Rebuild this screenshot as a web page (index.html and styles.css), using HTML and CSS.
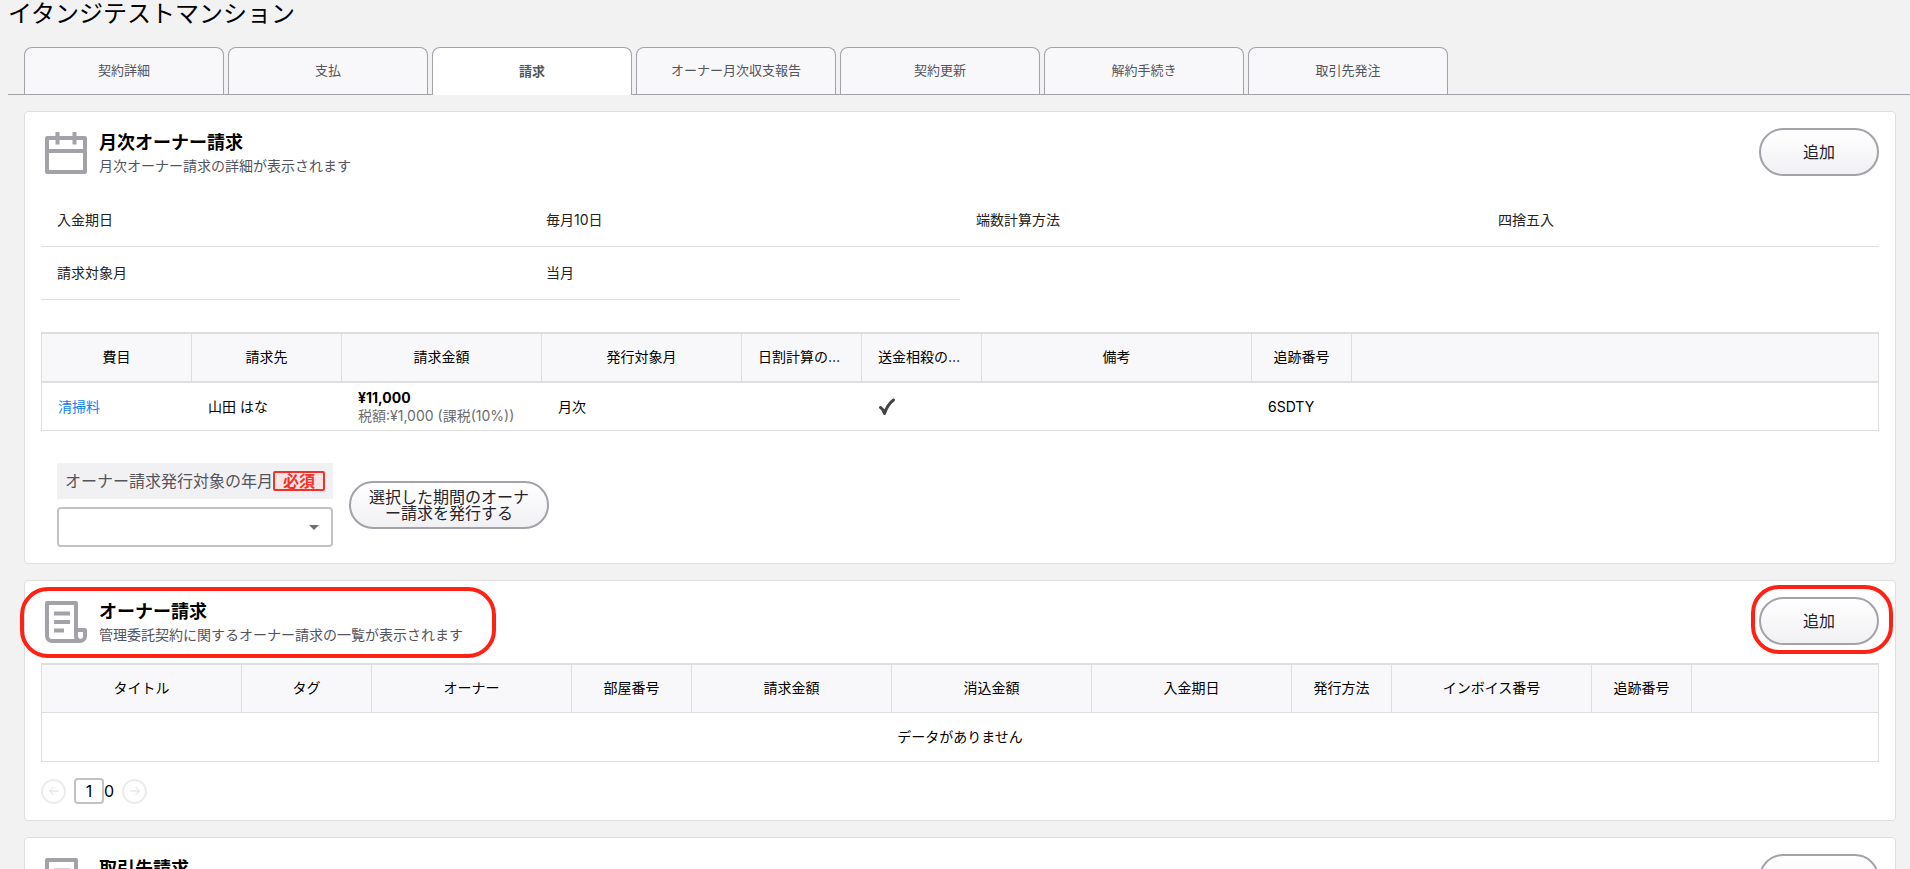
FILE: index.html
```html
<!DOCTYPE html>
<html lang="ja">
<head>
<meta charset="utf-8">
<title>イタンジテストマンション</title>
<link rel="stylesheet" href="styles.css">
</head>
<body>
<svg class="sprite" aria-hidden="true">
  <symbol id="doc" viewBox="0 0 42 42">
    <path d="M2 2h29v27h9v6a5 5 0 0 1-5 5H7a5 5 0 0 1-5-5zM31 29v6a5 5 0 0 0 4 5" fill="none" stroke="#a2a2a8" stroke-width="4" stroke-linejoin="round"/>
    <path d="M9 12.500h16M9 21h16M9 29.500h10" stroke="#a2a2a8" stroke-width="4"/>
  </symbol>
</svg>
<h1 class="page-title">イタンジテストマンション</h1>
<nav class="tabs">
  <a class="tab" href="#">契約詳細</a>
  <a class="tab" href="#">支払</a>
  <a class="tab tab-active" href="#">請求</a>
  <a class="tab" href="#">オーナー月次収支報告</a>
  <a class="tab" href="#">契約更新</a>
  <a class="tab" href="#">解約手続き</a>
  <a class="tab" href="#">取引先発注</a>
</nav>
<main class="cards">
  <section class="card">
    <header class="card-head">
      <div class="heading">
        <svg class="icon" viewBox="0 0 42 42" aria-hidden="true"><path d="M2 6h38v34H2zM2 19h38M12.500 0v12.500M29.500 0v12.500" fill="none" stroke="#a2a2a8" stroke-width="4" stroke-linejoin="round"/></svg>
        <div><h2 class="card-title">月次オーナー請求</h2><p class="card-sub">月次オーナー請求の詳細が表示されます</p></div>
      </div>
      <button class="btn" type="button">追加</button>
    </header>
    <div class="facts">
      <dl class="fact"><dt>入金期日</dt><dd>毎月10日</dd></dl>
      <dl class="fact fact-right"><dt>端数計算方法</dt><dd>四捨五入</dd></dl>
      <dl class="fact"><dt>請求対象月</dt><dd>当月</dd></dl>
    </div>
    <table class="grid grid-filled">
      <colgroup><col class="w150"><col class="w150"><col class="w200"><col class="w200"><col class="w120"><col class="w120"><col class="w270"><col class="w100"><col></colgroup>
      <thead><tr><th>費目</th><th>請求先</th><th>請求金額</th><th>発行対象月</th><th>日割計算の有無</th><th>送金相殺の有無</th><th>備考</th><th>追跡番号</th><th></th></tr></thead>
      <tbody><tr>
        <td><a class="link" href="#">清掃料</a></td><td>山田 はな</td>
        <td><div class="amount">¥11,000</div><div class="tax">税額:¥1,000 (課税(10%))</div></td>
        <td>月次</td><td></td>
        <td><svg class="check" viewBox="0 0 18 18" role="img" aria-label="あり"><path d="M2.500 9.500C5 11 5.500 13 6.500 15.500 8.500 9.500 11.500 5 15.500 2" fill="none" stroke="#444" stroke-width="3" stroke-linecap="round" stroke-linejoin="round"/></svg></td>
        <td></td><td>6SDTY</td><td></td>
      </tr></tbody>
    </table>
    <form class="issue">
      <div class="field">
        <label class="field-label" for="month">オーナー請求発行対象の年月<span class="required">必須</span></label>
        <div class="select-wrap"><select class="select" id="month"><option></option></select></div>
      </div>
      <button class="btn btn-wide" type="button">選択した期間のオーナー請求を発行する</button>
    </form>
  </section>
  <section class="card">
    <header class="card-head">
      <div class="heading marked mark-heading">
        <svg class="icon" aria-hidden="true"><use href="#doc"/></svg>
        <div><h2 class="card-title">オーナー請求</h2><p class="card-sub">管理委託契約に関するオーナー請求の一覧が表示されます</p></div>
      </div>
      <div class="marked mark-button"><button class="btn" type="button">追加</button></div>
    </header>
    <table class="grid">
      <colgroup><col class="w200"><col class="w130"><col class="w200"><col class="w120"><col class="w200"><col class="w200"><col class="w200"><col class="w100"><col class="w200"><col class="w100"><col></colgroup>
      <thead><tr><th>タイトル</th><th>タグ</th><th>オーナー</th><th>部屋番号</th><th>請求金額</th><th>消込金額</th><th>入金期日</th><th>発行方法</th><th>インボイス番号</th><th>追跡番号</th><th></th></tr></thead>
      <tbody><tr><td class="empty" colspan="11">データがありません</td></tr></tbody>
    </table>
    <div class="pager">
      <button class="page-btn" type="button" disabled aria-label="前へ"><svg viewBox="0 0 12 12"><path d="M11 6H2M5.500 2L1.500 6l4 4" fill="none" stroke="currentColor"/></svg></button>
      <div class="page-count"><input class="page-input" type="text" value="1" aria-label="ページ"><span>0</span></div>
      <button class="page-btn" type="button" disabled aria-label="次へ"><svg viewBox="0 0 12 12"><path d="M1 6h9M6.500 2l4 4-4 4" fill="none" stroke="currentColor"/></svg></button>
    </div>
  </section>
  <section class="card">
    <header class="card-head">
      <div class="heading">
        <svg class="icon" aria-hidden="true"><use href="#doc"/></svg>
        <div><h2 class="card-title">取引先請求</h2></div>
      </div>
      <button class="btn" type="button" aria-label="追加"></button>
    </header>
  </section>
</main>
</body>
</html>
```
FILE: styles.css
```css
* { box-sizing: border-box; }
html { height: 100%; overflow: hidden; }
body {
  margin: 0;
  padding-left: 8px;
  height: 100%;
  overflow: hidden;
  background: #f2f2f2;
  color: #000;
  font: 14px/20px Inter, "Noto Sans CJK JP", sans-serif;
}
h1, h2, p, dl, dd { margin: 0; }
button, input, select { font: inherit; color: inherit; }
.sprite { display: none; }

.page-title { font-size: 24px; line-height: 28px; font-weight: 400; }

.tabs {
  display: flex;
  gap: 4px;
  margin-top: 19px;
  padding-left: 16px;
  border-bottom: 1px solid #a2a2a8;
}
.tab {
  display: flex;
  align-items: center;
  justify-content: center;
  width: 200px;
  height: 47px;
  padding-bottom: 2px;
  border: 1px solid #a2a2a8;
  border-bottom: 0;
  border-radius: 8px 8px 0 0;
  background: #f8f8fa;
  color: #54545c;
  font-size: 13px;
  text-decoration: none;
}
.tab-active { height: 48px; margin-bottom: -1px; background: #fff; font-weight: 700; }

.cards { display: grid; gap: 16px; padding: 16px 14px 0 16px; }
.card {
  padding: 16px;
  border: 1px solid #dedede;
  border-radius: 4px;
  background: #fff;
}
.card-head { display: flex; justify-content: space-between; align-items: flex-start; margin-bottom: 16px; }
.heading { display: flex; align-items: flex-start; gap: 12px; padding: 4px 0 0 4px; }
.icon { flex: none; width: 42px; height: 42px; }
.card-title { font-size: 18px; line-height: 22px; font-weight: 700; }
.card-sub { color: #54545c; line-height: 24px; }

.btn {
  width: 120px;
  height: 48px;
  padding: 0 16px;
  border: 2px solid #a2a2a8;
  border-radius: 24px;
  background: linear-gradient(#fff, #f1f1f4);
  color: #23232b;
  font-size: 16px;
  line-height: 16px;
}
.btn-wide { width: 200px; padding: 0 12px; word-break: break-all; line-break: anywhere; }

.marked { position: relative; }
.marked::after {
  content: "";
  position: absolute;
  border: 4px solid #ff2113;
  border-radius: 28px;
  pointer-events: none;
}
.mark-heading::after { inset: -10px -33px -11px -21px; }
.mark-button::after { inset: -12px -14px -9px -8px; }

.facts { display: grid; grid-template-columns: 1fr 1fr; margin-bottom: 32px; }
.fact {
  display: grid;
  grid-template-columns: 489px 1fr;
  padding: 16px 0;
  border-bottom: 1px solid #dedede;
  color: #222;
}
.fact dt, .fact dd { padding-left: 16px; }
.fact-right { grid-template-columns: 522px 1fr; }

.grid {
  width: 100%;
  table-layout: fixed;
  border-collapse: separate;
  border-spacing: 0;
  border: 1px solid #dedede;
  border-top-width: 2px;
}
.grid th {
  height: 48px;
  padding: 0 16px 2px;
  overflow: hidden;
  border-right: 1px solid #dedede;
  border-bottom: 1px solid #dedede;
  background: #f8f8fa;
  font-weight: 400;
  text-align: center;
  text-overflow: ellipsis;
  white-space: nowrap;
}
.grid th:last-child { border-right: 0; }
.grid td { height: 48px; padding: 0 16px; line-height: 18px; white-space: nowrap; }
.grid-filled th { height: 49px; border-bottom-width: 2px; }
.grid-filled td { height: 47px; }
.grid .empty { text-align: center; }
.w100 { width: 100px; }
.w120 { width: 120px; }
.w130 { width: 130px; }
.w150 { width: 150px; }
.w200 { width: 200px; }
.w270 { width: 270px; }
.link { color: #0a84f5; text-decoration: none; }
.amount { font-weight: 700; }
.tax { color: #6c6c70; }
.check { display: block; width: 18px; height: 18px; }

.issue { display: flex; align-items: center; gap: 16px; padding: 32px 16px 0; }
.field { display: grid; gap: 8px; }
.field-label {
  display: flex;
  align-items: center;
  height: 36px;
  padding: 0 8px;
  background: #f1f1f4;
  color: #54545c;
  font-size: 16px;
}
.required {
  padding: 0 8px;
  border: 2px solid #f0312c;
  border-radius: 2px;
  background: #fde3e3;
  color: #f0312c;
  font-weight: 700;
  line-height: 16px;
}
.select-wrap { position: relative; }
.select-wrap::after {
  content: "";
  position: absolute;
  right: 14px;
  top: 18px;
  border: 5px solid transparent;
  border-top-color: #707070;
  border-bottom: 0;
  pointer-events: none;
}
.select {
  display: block;
  width: 100%;
  height: 40px;
  border: 2px solid #c2c2c4;
  border-radius: 4px;
  background: #fff;
  appearance: none;
}

.pager { display: flex; align-items: center; gap: 8px; margin-top: 16px; }
.page-btn {
  display: grid;
  place-items: center;
  width: 25px;
  height: 25px;
  padding: 0;
  border: 2px solid #ececec;
  border-radius: 50%;
  background: #fff;
  color: #dcdcdc;
}
.page-btn svg { width: 12px; height: 12px; }
.page-count { display: flex; align-items: center; font-size: 16px; }
.page-input {
  width: 30px;
  height: 26px;
  padding: 0;
  border: 2px solid #c2c2c4;
  border-radius: 4px;
  background: #fff;
  text-align: center;
}
```
